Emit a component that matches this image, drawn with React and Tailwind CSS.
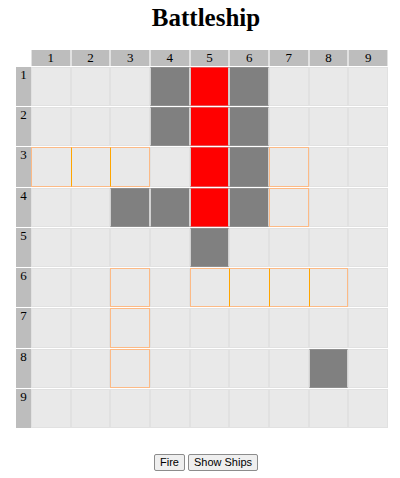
import React from "react";

const SIZE = 9;
const numbers = Array.from({ length: SIZE }, (_, i) => i + 1);

// One string per row: "." water, "m" miss, "h" hit, "o" ship outline.
// "[" opens a joined ship run, "=" is its middle, "]" is its end.
const board = [
  "...mhm...",
  "...mhm...",
  "[=].hmo..",
  "..mmhmo..",
  "....m....",
  "..o.[==].",
  "..o......",
  "..o....m.",
  ".........",
];

const look = {
  ".": "border bg-[#e9e9e9] border-[#e1e1e1]",
  m: "border bg-[#808080] border-x-[#d2d2d2] border-y-[#8f8f8f]",
  h: "border bg-[#ff0000] border-x-[#d2c8c8] border-y-[#e85050]",
  o: "border bg-[#e9e9e9] border-[#fcba86]",
  "[": "border-y border-l bg-[#e9e9e9] border-[#fcba86]",
  "=": "border-y border-l bg-[#e9e9e9] border-y-[#fcba86] border-l-[#ffa500]",
  "]": "border bg-[#e9e9e9] border-y-[#fcba86] border-r-[#fcba86] border-l-[#ffa500]",
};

function ActionButton({ children }) {
  return (
    <button
      type="button"
      className="h-[17px] rounded-[2px] border border-[#8c8c8c] bg-[#efefef] px-[5px] font-['Liberation_Sans',Arial,sans-serif] text-[11px] leading-[15px] text-black"
    >
      {children}
    </button>
  );
}

export default function App() {
  return (
    <main className="bg-white pt-1 pr-3 pl-4 font-['Liberation_Serif','Times_New_Roman',serif] text-black">
      <h1 className="pl-2 text-center text-[25px] leading-7 font-bold">Battleship</h1>

      <div
        role="grid"
        aria-label="Board"
        className="mt-[18px] grid aspect-[372/378] grid-cols-[15px_repeat(9,minmax(0,1fr))] grid-rows-[16px_repeat(9,minmax(0,1fr))] gap-y-px"
      >
        <div role="row" className="contents">
          <span />
          {numbers.map((n) => (
            <div
              key={n}
              role="columnheader"
              className="border-x border-[#e1e1e1] bg-[#bdbdbd] text-center text-[13px] leading-4"
            >
              {n}
            </div>
          ))}
        </div>
        {numbers.map((n, row) => (
          <div key={n} role="row" className="contents">
            <div role="rowheader" className="bg-[#bdbdbd] text-center text-[13px] leading-4">
              {n}
            </div>
            {numbers.map((c, col) => (
              <div key={c} role="gridcell" className={look[board[row][col]]} />
            ))}
          </div>
        ))}
      </div>

      <div className="mt-[26px] flex justify-center gap-[3px] pl-2">
        <ActionButton>Fire</ActionButton>
        <ActionButton>Show Ships</ActionButton>
      </div>
    </main>
  );
}
